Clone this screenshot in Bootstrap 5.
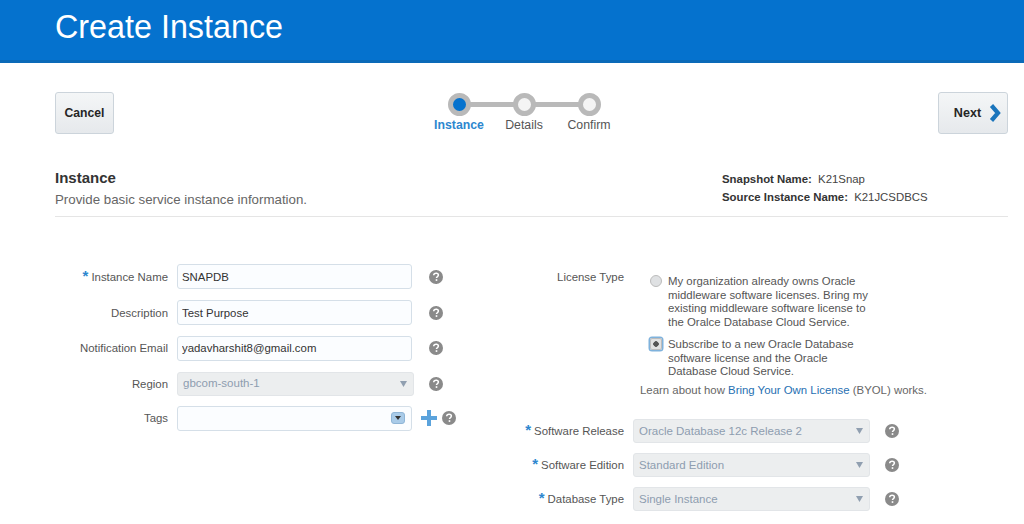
<!DOCTYPE html>
<html lang="en">
<head>
    <meta charset="UTF-8">
    <meta name="viewport" content="width=device-width, initial-scale=1.0">
    <title>Create Instance</title>
    <link href="https://cdn.jsdelivr.net/npm/bootstrap@5.3.0/dist/css/bootstrap.min.css" rel="stylesheet">
    <style>
        body {
            font-family: "Liberation Sans", Arial, sans-serif;
            font-size: 11.4px;
            color: #555;
            background: #fff;
            overflow: hidden;
        }

        .page-head {
            height: 63px;
            background: #0572ce;
            border-bottom: 3px solid #0a6ab8;
            color: #fff;
            padding-left: 55px;
        }

        .page-head h1 {
            font-size: 32.3px;
            font-weight: 400;
            line-height: 54px;
            margin: 0;
        }

        .page-body {
            padding: 29px 16px 0 55px;
        }

        /* Cancel / Next */
        .tool-btn {
            height: 42px;
            font-size: 12.2px;
            font-weight: 700;
            color: #252525;
            background: linear-gradient(#f4f6f7, #e6e9ec);
            border: 1px solid #ccd4db;
            border-radius: 3px;
            padding: 0;
        }

        .tool-btn.cancel-btn { width: 59px; }
        .tool-btn.next-btn { width: 70px; font-size: 12.6px; padding-left: 9px; }

        /* Train stops */
        .train {
            width: 190px;
            margin-right: 4px;
            font-size: 12.3px;
        }

        .train-stop {
            width: 60px;
            text-align: center;
            position: relative;
            color: #555;
        }

        .train-stop .dot {
            display: block;
            width: 23px;
            height: 23px;
            margin: 1px auto 0;
            border: 5px solid #b9b9b9;
            border-radius: 50%;
            background: #f4f4f4;
            position: relative;
            z-index: 1;
        }

        .train-stop.active .dot { background: #0572ce; }
        .train-stop.active { color: #2d87cf; font-weight: 700; }

        .train-stop + .train-stop::before {
            content: "";
            position: absolute;
            top: 10px;
            left: -25px;
            width: 50px;
            height: 5px;
            background: #b9b9b9;
        }

        /* Section title */
        .sect-head {
            margin-top: 35px;
            border-bottom: 1px solid #e5e5e5;
            height: 48px;
        }

        .sect-head h2 {
            font-size: 15px;
            font-weight: 700;
            color: #333;
            margin: 0;
            line-height: 18px;
        }

        .sect-head p {
            font-size: 13.3px;
            color: #666;
            margin: 3px 0 0;
        }

        .snap-info {
            width: 286px;
            line-height: 18px;
            color: #444;
            padding-top: 1px;
        }

        .snap-info b { margin-right: 3px; color: #333; }

        /* Form */
        .form-area {
            margin-top: 47px;
        }

        .left-col { width: 454px; }

        .form-line {
            display: flex;
            align-items: center;
            gap: 9px;
        }

        .left-col .form-line { height: 25px; margin-bottom: 10.7px; }
        .left-col .form-line.region-line { margin-bottom: 9px; }
        .right-col .form-line { height: 24px; margin-bottom: 10px; }

        .field-label {
            width: 113px;
            text-align: right;
            white-space: nowrap;
            flex-shrink: 0;
            padding-top: 1px;
        }

        .right-col .field-label { width: 115px; }

        .req { color: #2d87cf; font-weight: 700; font-size: 15px; line-height: 10px; margin-right: 3px; }

        .txt-field.form-control {
            width: 235px;
            height: 25px;
            min-height: 0;
            padding: 0 4px;
            font-size: 11.4px;
            color: #333;
            background: #fbfdff;
            border: 1px solid #d5dfe8;
            border-radius: 3px;
        }

        .tag-field.form-control { padding-right: 6px; }

        .sel-field.form-select {
            width: 237px;
            height: 24px;
            min-height: 0;
            padding: 0 5px;
            font-size: 11.5px;
            color: #8e9db0;
            background-color: #eceeef;
            background-image: url("data:image/svg+xml,%3Csvg xmlns='http://www.w3.org/2000/svg' width='7' height='6'%3E%3Cpath fill='%23909fb0' d='M0 0h7L3.5 6z'/%3E%3C/svg%3E");
            background-size: 7px 6px;
            background-position: right 6px center;
            border: 1px solid #e2e5e8;
            border-radius: 3px;
            opacity: 1;
        }

        .drop-btn {
            width: 14px;
            height: 12px;
            background: #a9cbe8;
            border: 1px solid #8fb5d6;
            border-radius: 3px;
        }

        .help-mark {
            flex-shrink: 0;
            margin-left: 8px;
        }

        .sel-help { margin-left: 6px; }

        .tag-tools { gap: 5px; }
        .tag-tools .help-mark { margin-left: 0; }

        /* License radios */
        .license-block {
            height: 155px;
        }

        .license-block .field-label {
            padding-top: 5px;
        }

        .lic-opt {
            display: flex;
            width: 223px;
            line-height: 13.5px;
            color: #555;
        }

        .lic-opt + .lic-opt { margin-top: 9px; }

        .lic-opt .form-check-input {
            width: 12px;
            height: 12px;
            margin: 0 6px 0 0;
            flex-shrink: 0;
            background: #dfe1e3;
            border: 1px solid #bcbcbc;
        }

        .lic-radios { margin-left: 26px; padding-top: 11px; }

        .lic-opt .form-check-input:checked {
            background: radial-gradient(circle, #555 0 2.5px, #e2e2e2 3px);
            border-color: #bcbcbc;
            box-shadow: 0 0 0 1.5px #7fb2dc;
            border-radius: 2px;
        }

        .lic-note {
            margin: 3px 0 0 -10px;
            white-space: nowrap;
            color: #666;
        }

        .lic-note a { color: #1f6fb2; text-decoration: none; }
    </style>
</head>
<body>
    <header class="page-head">
        <h1>Create Instance</h1>
    </header>

    <main class="page-body">
        <div class="d-flex justify-content-between align-items-start">
            <button type="button" class="btn tool-btn cancel-btn">Cancel</button>

            <div class="train d-flex justify-content-between">
                <div class="train-stop active"><span class="dot"></span>Instance</div>
                <div class="train-stop"><span class="dot"></span>Details</div>
                <div class="train-stop"><span class="dot"></span>Confirm</div>
            </div>

            <button type="button" class="btn tool-btn next-btn d-flex align-items-center justify-content-center gap-2">
                Next
                <svg width="12" height="18" viewBox="0 0 12 18"><path d="M2.5 1.5 9 9l-6.500 7.500" fill="none" stroke="#1a75bc" stroke-width="4.200"/></svg>
            </button>
        </div>

        <div class="sect-head d-flex justify-content-between">
            <div>
                <h2>Instance</h2>
                <p>Provide basic service instance information.</p>
            </div>
            <div class="snap-info">
                <div><b>Snapshot Name:</b> K21Snap</div>
                <div><b>Source Instance Name:</b> K21JCSDBCS</div>
            </div>
        </div>

        <div class="form-area d-flex">
            <div class="left-col">
                <div class="form-line">
                    <label class="field-label"><span class="req">*</span>Instance Name</label>
                    <input class="form-control txt-field" type="text" value="SNAPDB">
                    <svg class="help-mark" width="14" height="14" viewBox="0 0 14 14"><use href="#help"/></svg>
                </div>
                <div class="form-line">
                    <label class="field-label">Description</label>
                    <input class="form-control txt-field" type="text" value="Test Purpose">
                    <svg class="help-mark" width="14" height="14" viewBox="0 0 14 14"><use href="#help"/></svg>
                </div>
                <div class="form-line">
                    <label class="field-label">Notification Email</label>
                    <input class="form-control txt-field" type="text" value="yadavharshit8@gmail.com">
                    <svg class="help-mark" width="14" height="14" viewBox="0 0 14 14"><use href="#help"/></svg>
                </div>
                <div class="form-line region-line">
                    <label class="field-label">Region</label>
                    <select class="form-select sel-field" disabled><option>gbcom-south-1</option></select>
                    <svg class="help-mark sel-help" width="14" height="14" viewBox="0 0 14 14"><use href="#help"/></svg>
                </div>
                <div class="form-line">
                    <label class="field-label">Tags</label>
                    <div class="form-control txt-field tag-field d-flex align-items-center justify-content-end">
                        <span class="drop-btn d-flex align-items-center justify-content-center">
                            <svg width="6" height="4" viewBox="0 0 6 4"><path d="M0 0h6L3 4z" fill="#333"/></svg>
                        </span>
                    </div>
                    <div class="tag-tools d-flex align-items-center">
                        <svg width="16" height="16" viewBox="0 0 16 16"><path d="M6 0h4v6h6v4h-6v6H6v-6H0V6h6z" fill="#5ba3dc"/></svg>
                        <svg class="help-mark" width="14" height="14" viewBox="0 0 14 14"><use href="#help"/></svg>
                    </div>
                </div>
            </div>

            <div class="right-col">
                <div class="license-block d-flex align-items-start">
                    <label class="field-label">License Type</label>
                    <div class="lic-radios">
                        <div class="lic-opt">
                            <input class="form-check-input" type="radio" name="lic">
                            <span>My organization already owns Oracle middleware software licenses. Bring my existing middleware software license to the Oralce Database Cloud Service.</span>
                        </div>
                        <div class="lic-opt">
                            <input class="form-check-input" type="radio" name="lic" checked>
                            <span>Subscribe to a new Oracle Database software license and the Oracle Database Cloud Service.</span>
                        </div>
                        <p class="lic-note">Learn about how <a href="#">Bring Your Own License</a> (BYOL) works.</p>
                    </div>
                </div>
                <div class="form-line">
                    <label class="field-label"><span class="req">*</span>Software Release</label>
                    <select class="form-select sel-field" disabled><option>Oracle Database 12c Release 2</option></select>
                    <svg class="help-mark sel-help" width="14" height="14" viewBox="0 0 14 14"><use href="#help"/></svg>
                </div>
                <div class="form-line">
                    <label class="field-label"><span class="req">*</span>Software Edition</label>
                    <select class="form-select sel-field" disabled><option>Standard Edition</option></select>
                    <svg class="help-mark sel-help" width="14" height="14" viewBox="0 0 14 14"><use href="#help"/></svg>
                </div>
                <div class="form-line">
                    <label class="field-label"><span class="req">*</span>Database Type</label>
                    <select class="form-select sel-field" disabled><option>Single Instance</option></select>
                    <svg class="help-mark sel-help" width="14" height="14" viewBox="0 0 14 14"><use href="#help"/></svg>
                </div>
            </div>
        </div>
    </main>

    <svg width="0" height="0" class="d-none">
        <symbol id="help" viewBox="0 0 14 14">
            <circle cx="7" cy="7" r="7" fill="#8a8a8a"/>
            <path d="M4.7 5.3C4.8 3.9 5.8 3.2 7.1 3.2c1.4 0 2.3.8 2.3 1.900 0 1-.6 1.400-1.200 1.800-.5.3-.7.6-.7 1.200" fill="none" stroke="#fff" stroke-width="1.500"/>
            <rect x="6.700" y="9.200" width="1.600" height="1.700" fill="#fff"/>
        </symbol>
    </svg>
</body>
</html>
